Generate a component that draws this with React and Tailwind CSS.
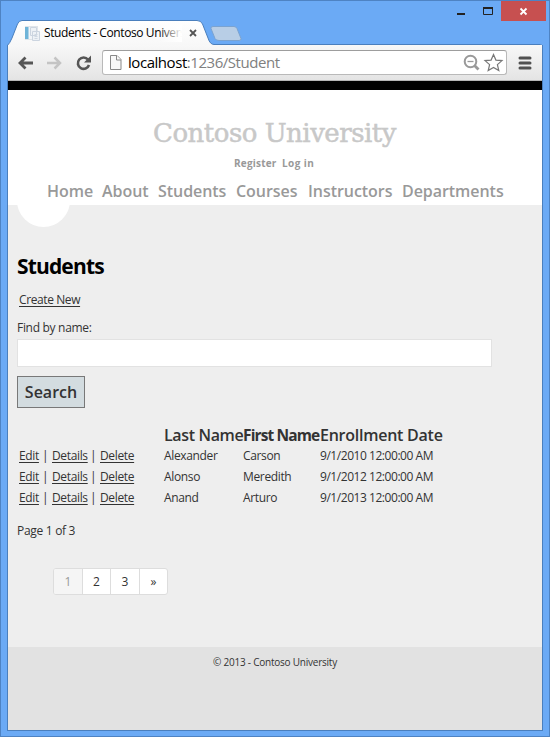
import React from 'react';

const navItems = [
  { label: 'Home', width: 'w-[55px]' },
  { label: 'About', width: 'w-[56px]' },
  { label: 'Students', width: 'w-[78px]' },
  { label: 'Courses', width: 'w-[72px]' },
  { label: 'Instructors', width: 'w-[94px]' },
  { label: 'Departments', width: 'w-[102px]' },
];

const students = [
  { last: 'Alexander', first: 'Carson', date: '9/1/2010 12:00:00 AM' },
  { last: 'Alonso', first: 'Meredith', date: '9/1/2012 12:00:00 AM' },
  { last: 'Anand', first: 'Arturo', date: '9/1/2013 12:00:00 AM' },
];

function TitleBar() {
  return (
    <div className="relative h-[44px]">
      <svg className="absolute left-0 top-0" width="548" height="44" viewBox="1 1 548 44">
        <defs>
          <linearGradient id="tab" x1="0" y1="0" x2="0" y2="1">
            <stop offset="0" stopColor="#ffffff" />
            <stop offset="1" stopColor="#f7f7f7" />
          </linearGradient>
        </defs>
        <path d="M213 26.500 H234 Q236 26.500 237 28.500 L241 38.500 Q241.500 40.500 239 40.500 H219 Q216 40.500 215 38.500 L211 28.500 Q210.500 26.500 213 26.500Z" fill="#b8cee6" stroke="#7ba3d0" />
        <path d="M7 46 Q10 43 12 38 L17.500 24 Q19 20.500 22 20.500 H197 Q201 20.500 202.500 24 L208 38 Q210 44.500 214 44.500 H540 Q542.500 44.500 542.500 47 H7Z" fill="url(#tab)" />
        <path d="M7 46 Q10 43 12 38 L17.500 24 Q19 20.500 22 20.500 H197 Q201 20.500 202.500 24 L208 38 Q210 44.500 214 44.500 H540 Q542.500 44.500 542.500 47" fill="none" stroke="#4a7fbd" />
        <rect x="25.500" y="26.500" width="12" height="13" fill="#f2f5f8" stroke="#dfe4e9" />
        <rect x="25" y="27" width="3.500" height="12" fill="#6fb4d8" />
        <path d="M30.500 27.500h6v8h-6z M32.500 31.500h7v9h-7z" fill="#eef2f6" stroke="#ccd5e0" />
        <path d="M34.500 34.500h3M34.500 36.500h3M34.500 38.500h3" stroke="#cfd8e2" />
        <path d="M190 30l6 6M196 30l-6 6" stroke="#555" strokeWidth="1.800" />
        <rect x="457" y="13" width="8" height="2" fill="#222" />
        <path d="M483.500 8.500h9v6h-9z" fill="none" stroke="#222" strokeWidth="1" />
        <rect x="483" y="7" width="10" height="2" fill="#222" />
        <rect x="501" y="1" width="45" height="20" fill="#c75050" />
        <path d="M520.500 8.500l6 6M526.500 8.500l-6 6" stroke="#fff" strokeWidth="1.800" />
      </svg>
      <div className="absolute left-[43px] top-[23px] w-[138px] overflow-hidden whitespace-nowrap text-[12px] leading-[18px] tracking-[-0.4px] text-black">
        Students - Contoso University
        <div className="absolute right-0 top-0 h-full w-[24px] bg-linear-to-r from-transparent to-white" />
      </div>
    </div>
  );
}

function Toolbar() {
  return (
    <div className="flex h-[36px] items-center border-b border-[#b5b5b5] bg-linear-to-b from-[#f8f8f8] to-[#e4e4e4]">
      <svg className="shrink-0" width="94" height="34" viewBox="8 45 94 34" fill="none">
        <path d="M33 62H20M25.500 56.500L20 62l5.500 5.500" stroke="#555" strokeWidth="2.800" />
        <path d="M47 62H60M54.500 56.500l5.500 5.500-5.500 5.500" stroke="#c4c4c4" strokeWidth="2.500" />
        <path d="M88 58.500A5.700 5.700 0 1 0 89 64" stroke="#555" strokeWidth="2.600" />
        <path d="M91 54.500v7h-7z" fill="#555" />
      </svg>
      <div className="flex h-[25px] w-[405px] shrink-0 items-center rounded-[3px] border border-[#b9b9b9] border-t-[#9d9d9d] bg-white">
        <svg className="ml-[6px] shrink-0" width="14" height="17" viewBox="0 0 14 17" fill="#f8f8f8" stroke="#888">
          <path d="M1.500 1.500h6.500l4 4v10H1.500z" />
          <path d="M7.500 1.500v4.500h4.500" />
        </svg>
        <div className="relative -top-px ml-[5px] flex-1 whitespace-nowrap text-[15px] leading-[22px] tracking-[-0.45px] text-[#808080]"><span className="text-black">localhost</span>:1236/Student</div>
        <svg className="mr-[1px] shrink-0" width="42" height="23" viewBox="463 51 42 23" fill="none">
          <circle cx="470.500" cy="61.500" r="5.800" stroke="#999" strokeWidth="2" />
          <path d="M467.500 61.500h6" stroke="#999" strokeWidth="1.300" />
          <path d="M474.500 65.500l4 4" stroke="#999" strokeWidth="2.800" />
          <path d="M493.500 54.500l2.400 5.600 6.100.5-4.600 4 1.400 6-5.300-3.200-5.300 3.200 1.400-6-4.600-4 6.100-.5z" stroke="#777" strokeWidth="1.200" />
        </svg>
      </div>
      <svg className="ml-[11px] shrink-0" width="14" height="14" viewBox="0 0 14 14">
        <path d="M2 2h10M2 7h10M2 12h10" stroke="#505050" strokeWidth="3" strokeLinecap="round" />
      </svg>
    </div>
  );
}

function SiteHeader() {
  return (
    <header className="h-[124px] border-t-[9px] border-black bg-white font-semibold text-[#999]">
      <h1 className="ml-[145px] pt-[28px] whitespace-nowrap font-['DejaVu_Serif',serif] text-[26px] leading-[30px] font-normal tracking-[-0.5px] text-[#c8c8c8] [-webkit-text-stroke:0.5px_#c8c8c8]">Contoso University</h1>
      <div className="mt-[7px] flex text-[10px] leading-[16px] font-bold tracking-[0.2px] whitespace-nowrap">
        <a className="ml-[226px] w-[48px]">Register</a>
        <a className="tracking-[0.4px]">Log in</a>
      </div>
      <nav className="ml-[39px] mt-[9px] flex text-[16px] leading-[22px] tracking-[-0.05px] whitespace-nowrap">
        {navItems.map((item) => <a key={item.label} className={item.width}>{item.label}</a>)}
      </nav>
    </header>
  );
}

function StudentTable() {
  return (
    <div className="mt-[17px] text-[12px] leading-[21px] tracking-[-0.35px] whitespace-nowrap">
      <div className="ml-[147px] flex h-[20px] text-[16px] leading-[21px] font-semibold tracking-[-0.25px]">
        <div className="w-[79px] tracking-[-0.35px]">Last Name</div>
        <div className="w-[77px] text-[15.5px] font-bold tracking-[-0.88px]">First Name</div>
        <div>Enrollment Date</div>
      </div>
      {students.map((s) => (
        <div key={s.last} className="flex h-[21px]">
          <div className="flex w-[147px] pl-[2px]">
            <a className="w-[23px] underline underline-offset-2">Edit</a>
            <span className="w-[10px]">|</span>
            <a className="w-[38px] underline underline-offset-2">Details</a>
            <span className="w-[10px]">|</span>
            <a className="underline underline-offset-2">Delete</a>
          </div>
          <div className="w-[79px]">{s.last}</div>
          <div className="w-[77px]">{s.first}</div>
          <div className="tracking-[-0.45px]">{s.date}</div>
        </div>
      ))}
    </div>
  );
}

function Pager() {
  return (
    <div className="ml-[36px] mt-[27px] flex h-[27px] w-[115px] divide-x divide-[#ddd] overflow-hidden rounded-[3px] border border-[#ddd] bg-white text-center text-[12px] leading-[25px]">
      <span className="w-[29px] bg-[#f5f5f5] text-[#999]">1</span>
      <a className="w-[28px]">2</a>
      <a className="w-[29px]">3</a>
      <a className="flex-1">»</a>
    </div>
  );
}

export default function App() {
  return (
    <div className="h-[737px] w-[550px] overflow-hidden border border-[#4e83c3] bg-[#6baaf5] font-['Open_Sans','Noto_Sans',sans-serif] text-[#333]">
      <TitleBar />
      <div className="ml-[6px] w-[536px] border border-[#4a7fbd] border-t-0">
        <Toolbar />
        <SiteHeader />
        <main className="h-[442px] bg-[#eee] pl-[9px]">
          <div className="h-[22px] w-[53px] overflow-hidden">
            <div className="-mt-[31px] h-[53px] w-[53px] rounded-full bg-white" />
          </div>
          <h2 className="mt-[24px] text-[21px] leading-[30px] font-bold tracking-[-0.85px] text-black">Students</h2>
          <a className="mt-[9px] ml-[2px] block text-[12px] leading-[20px] tracking-[-0.4px] underline underline-offset-2">Create New</a>
          <label className="mt-[8px] block text-[12px] leading-[20px] tracking-[-0.3px]">Find by name:</label>
          <input className="mt-[1px] block h-[28px] w-[475px] border border-[#e2e2e2] bg-white" />
          <button className="mt-[9px] block h-[32px] w-[68px] border border-[#787878] bg-[#d3dce0] text-[16px] leading-[28px] font-semibold tracking-[0px]">Search</button>
          <StudentTable />
          <p className="mt-[13px] text-[12px] leading-[20px] tracking-[-0.3px]">Page 1 of 3</p>
          <Pager />
        </main>
        <footer className="h-[83px] bg-[#e2e2e2] pt-[7px] text-center text-[10px] leading-[17px] tracking-[-0.23px]">© 2013 - Contoso University</footer>
      </div>
    </div>
  );
}
